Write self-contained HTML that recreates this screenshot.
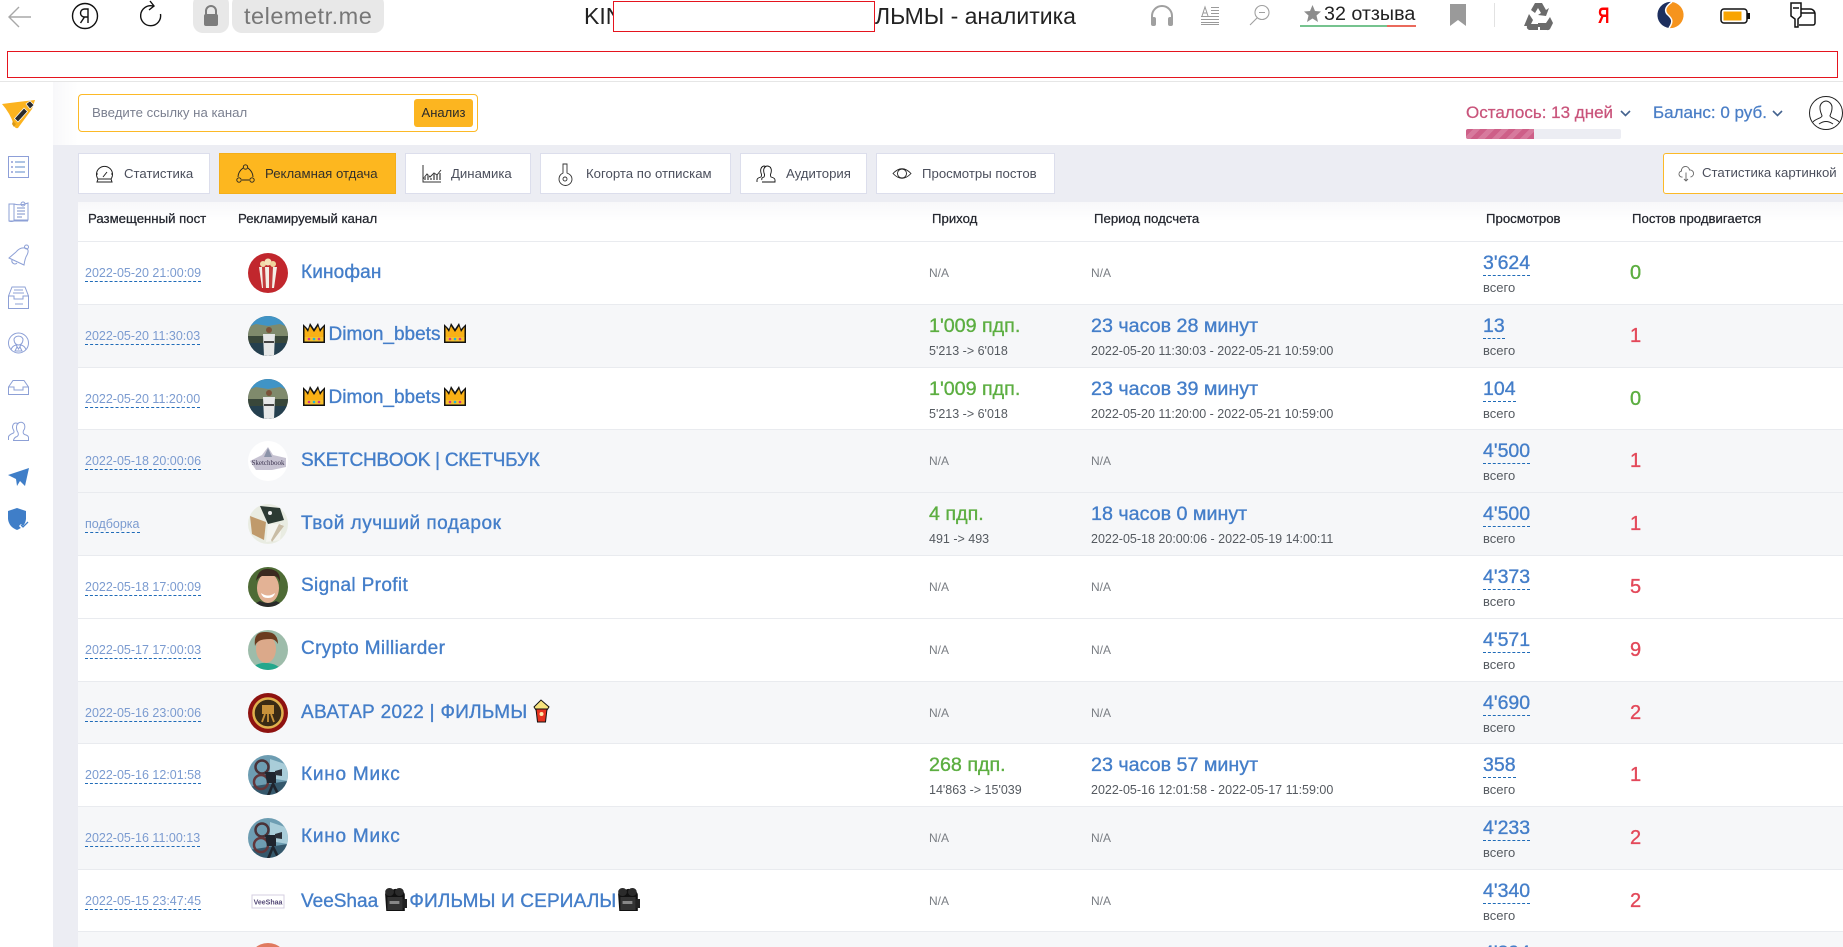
<!DOCTYPE html>
<html lang="ru"><head><meta charset="utf-8"><title>telemetr.me</title>
<style>
html,body{margin:0;padding:0;width:1843px;height:947px;overflow:hidden;background:#fff;font-family:"Liberation Sans","Noto Sans CJK SC",sans-serif}
*{box-sizing:border-box}
.a{position:absolute;white-space:nowrap}
svg{position:absolute;display:block;overflow:visible}
.tab{position:absolute;top:153px;height:41px;background:#fff;border:1px solid #dcdeec;font-size:13.2px;color:#4b4f5c;line-height:39px;white-space:nowrap}
.tab span{position:absolute;top:0}
.th{position:absolute;top:209px;line-height:20px;font-size:13.2px;color:#23262e;white-space:nowrap;-webkit-text-stroke:.25px #23262e}
.r{position:absolute;left:78px;width:1765px;border-top:1px solid #e9ebef;background:#fff;overflow:hidden}
.g{background:#f6f7f9}
.r>*{position:absolute;white-space:nowrap}
.dt{left:7px;top:22px;height:18px;line-height:19px;font-size:12.5px;color:#7b9bd0;border-bottom:1px dashed #1f6bb8}
.av{left:170px;top:11px;width:40px;height:40px}
.nm{left:223px;top:18px;line-height:25px;font-size:19px;color:#447ec9;-webkit-text-stroke:.35px #447ec9}
.up{top:17px}
.nm svg{position:static;display:inline-block;vertical-align:-4px}
.big{top:9px;line-height:24px;font-size:19.7px;-webkit-text-stroke:.35px currentColor}
.in{left:851px;color:#5cae41}.pr{left:1013px;color:#447ec9}
.sm{top:36px;line-height:20px;font-size:12.5px;color:#555a60}
.na{top:21px;line-height:20px;font-size:12px;color:#7a7e84}
.vw{left:1405px;top:9px;height:25px;line-height:24px;font-size:19.5px;color:#447ec9;border-bottom:1px dashed #1f6bb8;-webkit-text-stroke:.35px #447ec9}
.ws{left:1405px;top:36px;line-height:20px;font-size:13px;color:#555a60}
.ct{left:1552px;top:19px;line-height:24px;font-size:20px;-webkit-text-stroke:.35px currentColor}
.red{color:#e3495a}.grn{color:#5cae41}
.av{filter:blur(.35px)}
</style></head><body>

<svg width="0" height="0" style="position:absolute">
<defs>
<symbol id="crown" viewBox="0 0 24 22"><path d="M1 2l5 5 2-6 4 6 4-6 2 6 5-5v19H1z" fill="#111"/><path d="M2.500 5l3.500 5 2-6 4 6 4-6 2 6 3.500-5v11h-19z" fill="#f9b015"/><path d="M2.500 15h19v4.500h-19z" fill="#f6c02c"/><circle cx="7" cy="17" r="1.300" fill="#d6338f"/><circle cx="12" cy="17" r="1.300" fill="#20b6d6"/><circle cx="17" cy="17" r="1.300" fill="#d6338f"/></symbol>
<symbol id="cam" viewBox="0 0 22 24" preserveAspectRatio="none"><path d="M2 8a4 4 0 0 1 6-4 4 4 0 0 1 7 0 4 4 0 0 1 5 4v16H3z" fill="#111"/><circle cx="6" cy="5" r="4" fill="#2b2b2b"/><circle cx="15" cy="5" r="4" fill="#2b2b2b"/><path d="M4 10h14v13H4z" fill="#333"/><path d="M6 14h9v3H6z" fill="#888"/><path d="M18 12h4v9h-4z" fill="#222"/></symbol>
<symbol id="p1" viewBox="0 0 40 40"><defs><clipPath id="c1"><circle cx="20" cy="20" r="20"/></clipPath></defs><g clip-path="url(#c1)"><path d="M0 0h40v40H0z" fill="#2a3f4d"/><path d="M0 0h40v12H0z" fill="#4094c6"/><path d="M0 11l8-3 12 2 12-2 8 3v9H0z" fill="#7f8a6c"/><path d="M0 20h40v8H0z" fill="#39473a"/><path d="M0 27h40v13H0z" fill="#25404f"/><circle cx="21" cy="14" r="3" fill="#7a5239"/><path d="M15 18h12l-1 22H16z" fill="#e6e8e8"/><path d="M16 25h10v2H16z" fill="#444"/></g></symbol>
<symbol id="p2" viewBox="0 0 40 40"><defs><clipPath id="c2"><circle cx="20" cy="20" r="20"/></clipPath></defs><g clip-path="url(#c2)"><path d="M0 0h40v40H0z" fill="#6d9db2"/><path d="M22 4l18 6v16l-18-3z" fill="#a9cdd9"/><path d="M0 32l40-6v14H0z" fill="#35586c"/><circle cx="14" cy="12" r="6.500" fill="none" stroke="#4a3238" stroke-width="2.500"/><circle cx="13" cy="27" r="7" fill="none" stroke="#63363a" stroke-width="2.500"/><path d="M17 17h11v11H19z" fill="#1f252e"/><path d="M27 16l7-2v7l-7-1z" fill="#2b3038"/><path d="M24 28l-5 12h3l3-8 4 8h3l-6-12z" fill="#1f252e"/></g></symbol>
</defs></svg>

<!-- browser bar -->
<svg style="left:8px;top:6px" width="24" height="22" fill="none" stroke="#a8a8a8" stroke-width="1.400"><path d="M1 11h22M11 1L1 11l10 10"/></svg>
<svg style="left:71px;top:2px" width="28" height="28" fill="none" stroke="#111" stroke-width="1.400"><circle cx="14" cy="14" r="12.500"/><path d="M17 21V7h-3.500a4 4 0 0 0 0 8H17M13.500 15l-4 6"/></svg>
<svg style="left:139px;top:1px" width="24" height="26" fill="none" stroke="#111" stroke-width="1.400"><path d="M21.500 13A10 10 0 1 1 14 5M11 0l4 5-5 4"/></svg>
<div class="a" style="left:193px;top:-6px;width:36px;height:39px;background:#e8e8e8;border-radius:10px"></div>
<svg style="left:203px;top:5px" width="16" height="22"><path d="M3 10V6a5 5 0 0 1 10 0v4" fill="none" stroke="#7d7d7d" stroke-width="2"/><rect x="1" y="9" width="14" height="12" rx="2" fill="#7d7d7d"/></svg>
<div class="a" style="left:232px;top:-6px;width:152px;height:39px;background:#e8e8e8;border-radius:10px"></div>
<div class="a" style="left:244px;top:1px;line-height:30px;font-size:23.500px;color:#777;letter-spacing:.5px">telemetr.me</div>
<div class="a" style="left:584px;top:1px;line-height:30px;font-size:23px;color:#222">KIN</div>
<div class="a" style="left:875px;top:1px;line-height:30px;font-size:23px;color:#222">ЛЬМЫ - аналитика</div>
<div class="a" style="left:613px;top:1px;width:262px;height:31px;border:1px solid #e5141e;background:#fff"></div>
<svg style="left:1150px;top:5px" width="24" height="21"><path d="M2 14V11a10 10 0 0 1 20 0v3" fill="none" stroke="#a0a0a0" stroke-width="2"/><rect x="1" y="12" width="5" height="9" rx="2" fill="#a0a0a0"/><rect x="18" y="12" width="5" height="9" rx="2" fill="#a0a0a0"/></svg>
<svg style="left:1201px;top:6px" width="18" height="19" fill="none" stroke="#9a9a9a"><path d="M1 10l3-9 3 9M2 7h4M10 1.500h8M10 4.500h8M10 7.500h8M0 10.500h18M0 13.500h18M0 16.500h18M0 18.500h18"/></svg>
<svg style="left:1249px;top:5px" width="21" height="20" fill="none" stroke="#a0a0a0" stroke-width="1.100"><circle cx="13" cy="7.500" r="7"/><path d="M8 13L1 20M10 7.500h6"/></svg>
<svg style="left:1304px;top:5px" width="17" height="17"><path d="M8.500 0l2.500 6 6 .5-4.500 4 1.500 6.500-5.500-3.500L3 17l1.500-6.500L0 6.500 6 6z" fill="#8c8c8c"/></svg>
<div class="a" style="left:1324px;top:1px;line-height:26px;font-size:19.700px;color:#222">32 отзыва</div>
<div class="a" style="left:1300px;top:25px;width:87px;height:2px;background:#76c38f"></div>
<div class="a" style="left:1387px;top:25px;width:29px;height:2px;background:#ea6a5c"></div>
<svg style="left:1450px;top:4px" width="16" height="22"><path d="M0 0h16v22l-8-6-8 6z" fill="#9a9a9a"/></svg>
<div class="a" style="left:1494px;top:3px;width:1px;height:24px;background:#e2e2e2"></div>
<svg style="left:1524px;top:2px" width="29" height="28"><path d="M11 1h7l4 7 3-2-3 8-8-1 3-2-3-5-3 5-4-3zM5 12l4 6-2 4h7v6H6a3 3 0 0 1-3-4l-3 0zM16 28v-3l-2 0 0-7 0 3 8 0 4-6 3 6-3 6a3 3 0 0 1-3 1h-4z" fill="#6b6b6b"/></svg>
<div class="a" style="left:1598px;top:3px;line-height:26px;font-size:22px;font-weight:bold;color:#f00;transform:scaleX(.72);transform-origin:left">Я</div>
<svg style="left:1656px;top:2px" width="27" height="26"><path d="M16 0C10 4 8 8 11 12 14 15 19 18 13 26A13 13 0 0 1 16 0z" fill="#1d2f5e"/><path d="M16 0C10 4 8 8 11 12 14 15 19 18 13 26A13 13 0 0 0 16 0z" fill="#f6941d"/><path d="M16 0C10 4 8 8 11 12 14 15 19 18 13 26" fill="none" stroke="#fff" stroke-width="1.500"/></svg>
<svg style="left:1720px;top:8px" width="31" height="16"><rect x="1" y="1" width="26" height="14" rx="3" fill="#fff" stroke="#111" stroke-width="1.500"/><rect x="3.500" y="3.500" width="18" height="9" fill="#f9a400"/><rect x="27" y="5" width="3" height="6" fill="#111"/></svg>
<svg style="left:1789px;top:2px" width="28" height="27" fill="none" stroke="#111" stroke-width="1.500"><path d="M2 1h10v13l-3 3v8H6v-8L2 14zM4 6h6M12 7h9a5 5 0 0 1 5 5v9a2 2 0 0 1-2 2H10M12 11h14"/></svg>

<div class="a" style="left:7px;top:51px;width:1831px;height:27px;border:1px solid #e5141e"></div>
<div class="a" style="left:0;top:81px;width:1843px;height:1px;background:#e6e6e6"></div>

<!-- layout backgrounds -->
<div class="a" style="left:53px;top:82px;width:25px;height:63px;background:linear-gradient(90deg,#f8f8fa,#fff)"></div>
<div class="a" style="left:53px;top:145px;width:1790px;height:57px;background:#ecedf3"></div>
<div class="a" style="left:53px;top:202px;width:25px;height:745px;background:#ecedf3"></div>
<div class="a" style="left:78px;top:202px;width:1765px;height:39px;background:linear-gradient(#f8f8fa,#fff 50%)"></div>

<!-- sidebar -->
<svg style="left:1px;top:99px" width="35" height="30"><path d="M1 5Q16 3 34 1L31 10 17 29Q14 30 13 26Q9 14 1 5z" fill="#fcb31f"/><path d="M25 5l4-3 4 4-4 4zM23 9l3.500 3.500L17 23l-3.500-3.500z" fill="#2c2c2c" stroke="#fff" stroke-width=".7"/><path d="M12 22l3 3-2 3-2-3z" fill="#d99a18"/></svg>
<svg style="left:8px;top:156px" width="21" height="22" fill="none" stroke="#8d9fd8"><rect x=".5" y=".5" width="20" height="21"/><path d="M7 6h10M7 11h10M7 16h10" stroke="#5d8ac9"/><path d="M3 6h2M3 11h2M3 16h2" stroke="#5a6ac0"/></svg>
<svg style="left:8px;top:201px" width="21" height="21" fill="none" stroke="#8da0d6"><path d="M1 3h5v17H1zM6 3q7 2 14-1v17H6M1 20q2 1 5 0h14"/><path d="M9 7h8M9 10h8M9 13h8M9 16h5" stroke="#7a8fc9"/><circle cx="15" cy="3" r="2"/></svg>
<svg style="left:8px;top:244px" width="21" height="22" fill="none" stroke="#8da0d6"><path d="M1 14L8 8Q12 3 17 4t2 7Q17 14 16 21zM1 14l15 7M4 16a3 3 0 0 0 5 3"/><circle cx="18.500" cy="3" r="2"/></svg>
<svg style="left:8px;top:286px" width="21" height="23" fill="none" stroke="#8da0d6"><path d="M.5 10L4 1h13l3.500 9v12.500H.5zM.5 10H6v3h9v-3h5.500M6 4h9M5 7h11M7 18h8" /></svg>
<svg style="left:8px;top:332px" width="21" height="22" fill="none" stroke="#8da0d6"><circle cx="10.500" cy="11" r="10"/><path d="M6 7a5 5 0 0 1 9 0c0 4-2 6-4.500 6S6 11 6 7zM3 18q1-4 5-5l2.500 4 2.500-4q4 1 5 5M9 15l-2 4h7l-2-4"/></svg>
<svg style="left:8px;top:380px" width="21" height="15" fill="none" stroke="#8da0d6"><path d="M.5 7L5 .5h11L20.500 7v7.500H.5zM.5 7H6v3h9V7h5.500"/></svg>
<svg style="left:8px;top:421px" width="21" height="20" fill="none" stroke="#8da0d6"><path d="M.5 19v-3q0-2 5-4 1-1 0-3-2-3 0-6 2-2 5 0M5 19.500h15.500v-3q0-2-4-3-2-1-1-4 2-2 1-6-2-3-5-2-3 1-3 5 0 3 1.500 5 1 3-1 4-3 1-3.500 4"/></svg>
<svg style="left:8px;top:468px" width="21" height="18"><path d="M0 7L21 0 17 18l-5-5-3 5-1-7z" fill="#3f7ec8"/></svg>
<svg style="left:8px;top:508px" width="21" height="22"><path d="M9 0l9 3v8q-1 8-9 11Q1 19 0 11V3z" fill="#3f7ec8"/><path d="M12 17l3 3 6-6" stroke="#fff" stroke-width="3" fill="none"/><path d="M13 17l2 2 5-5" stroke="#3f7ec8" stroke-width="1.300" fill="none"/></svg>

<!-- search -->
<div class="a" style="left:78px;top:94px;width:400px;height:38px;border:1px solid #fcb927;border-radius:4px;background:#fff"></div>
<div class="a" style="left:92px;top:103px;line-height:20px;font-size:13.2px;color:#7b8090">Введите ссылку на канал</div>
<div class="a" style="left:414px;top:99px;width:59px;height:28px;background:#fcb520;border-radius:3px;text-align:center;line-height:28px;font-size:13px;color:#2a2a2a">Анализ</div>

<!-- right header -->
<div class="a" style="left:1466px;top:102px;line-height:22px;font-size:17px;color:#c9547b;-webkit-text-stroke:.25px #c9547b">Осталось: 13 дней</div>
<svg style="left:1620px;top:110px" width="11" height="7" fill="none" stroke="#44638f" stroke-width="1.600"><path d="M1 1l4.500 4.500L10 1"/></svg>
<div class="a" style="left:1653px;top:102px;line-height:22px;font-size:17px;color:#4a7ec6;-webkit-text-stroke:.25px #4a7ec6">Баланс: 0 руб.</div>
<svg style="left:1772px;top:110px" width="11" height="7" fill="none" stroke="#44638f" stroke-width="1.600"><path d="M1 1l4.500 4.500L10 1"/></svg>
<div class="a" style="left:1466px;top:129px;width:155px;height:10px;background:#ecedf3;border-radius:2px"></div>
<div class="a" style="left:1466px;top:129px;width:68px;height:10px;border-radius:2px 0 0 2px;background:repeating-linear-gradient(-45deg,#ce5f88 0 5px,#d77a9d 5px 10px)"></div>
<svg style="left:1809px;top:96px" width="34" height="34" fill="none" stroke="#222"><circle cx="17" cy="17" r="16.500"/><path d="M17 5a6.500 6.500 0 0 0-6 7c0 4 2 7 2 8 0 2-7 3-9 6M17 5a6.500 6.500 0 0 1 6 7c0 4-2 7-2 8 0 2 7 3 9 6M10 28q7-5 14 0"/></svg>

<!-- tabs -->
<div class="tab" style="left:78px;width:132px"><span style="left:45px">Статистика</span></div>
<svg style="left:95px;top:165px" width="19" height="18" fill="none" stroke="#222"><path d="M3 14a8 8 0 1 1 13 0M2 17h15l-1-3H3zM8 12l4-5M1 9h2M16 9h2"/></svg>
<div class="tab" style="left:219px;width:177px;background:#fdb71f;border-color:#f4af1a;color:#33302a"><span style="left:45px">Рекламная отдача</span></div>
<svg style="left:236px;top:164px" width="19" height="19" fill="none" stroke="#222" stroke-width=".9"><circle cx="9.500" cy="3" r="2.200"/><circle cx="3" cy="16" r="2.200"/><circle cx="16" cy="16" r="2.200"/><path d="M6 16h7M2 13q0-5 5-9M17 13q0-5-5-9"/></svg>
<div class="tab" style="left:405px;width:126px"><span style="left:45px">Динамика</span></div>
<svg style="left:422px;top:165px" width="19" height="18" fill="none" stroke="#333"><path d="M1 0v17h18M1 14l4-5 3 3 4-4 3 2 4-5"/><path d="M3 15V11M6 15v-5M9 15v-2M12 15V9M15 15v-5M18 15V8" stroke="#888" stroke-width="2"/></svg>
<div class="tab" style="left:540px;width:191px"><span style="left:45px">Когорта по отпискам</span></div>
<svg style="left:558px;top:163px" width="15" height="22" fill="none" stroke="#333" stroke-width=".9"><path d="M5 1h4v9q5 2 5 6a6 6 0 0 1-13 0q0-4 4-6z"/><circle cx="7" cy="16" r="2"/></svg>
<div class="tab" style="left:740px;width:127px"><span style="left:45px">Аудитория</span></div>
<svg style="left:757px;top:165px" width="18" height="18" fill="none" stroke="#111" stroke-width=".9"><path d="M0 17v-2q0-2 4-3 1-2 0-4-1-4 1-6 2-2 4 0M5 17h13v-2q0-2-4-3-1-2 0-4 1-4-1-6-3-2-5 0-2 2-1 6 1 2 0 4-3 1-2 3"/></svg>
<div class="tab" style="left:876px;width:179px"><span style="left:45px">Просмотры постов</span></div>
<svg style="left:893px;top:167px" width="18" height="13" fill="none" stroke="#222" stroke-width=".9"><path d="M0 6.500Q9-3 18 6.500 9 16 0 6.500z"/><circle cx="9" cy="6.500" r="4.500"/><path d="M6 3q3-2 6 0"/></svg>
<div class="tab" style="left:1663px;width:190px;border-color:#fcb927;border-radius:3px"><span style="left:38px;top:-1px">Статистика картинкой</span></div>
<svg style="left:1679px;top:166px" width="14" height="16" fill="none" stroke="#666" stroke-width=".9"><path d="M3.500 11a3 3 0 0 1-1-6 4 4 0 0 1 8-1 3 3 0 0 1 1 7M7 6.500v8.500M5 13l2 2 2-2"/></svg>

<!-- table header -->
<div class="th" style="left:88px">Размещенный пост</div>
<div class="th" style="left:238px">Рекламируемый канал</div>
<div class="th" style="left:932px">Приход</div>
<div class="th" style="left:1094px">Период подсчета</div>
<div class="th" style="left:1486px">Просмотров</div>
<div class="th" style="left:1632px">Постов продвигается</div>

<!-- rows -->
<div class="r" style="top:241px;height:63px">
<div class="dt">2022-05-20 21:00:09</div>
<svg class="av" viewBox="0 0 40 40"><circle cx="20" cy="20" r="20" fill="#c1272d"/><path d="M11 14h18l-3 21H14z" fill="#f4efe6"/><path d="M14 14l1 21h3l-1-21zM21 14l0 21h3l1-21z" fill="#c43d3d"/><circle cx="15" cy="11" r="3" fill="#f0d9a8"/><circle cx="20" cy="9" r="3.500" fill="#f4e2b8"/><circle cx="25" cy="11" r="3" fill="#efd49c"/></svg>
<div class="nm" style="letter-spacing:.15px">Кинофан</div>
<div class="na" style="left:851px">N/A</div><div class="na" style="left:1013px">N/A</div>
<div class="vw">3'624</div><div class="ws">всего</div><div class="ct grn">0</div>
</div>

<div class="r g" style="top:304px;height:63px">
<div class="dt">2022-05-20 11:30:03</div>
<svg class="av"><use href="#p1" width="40" height="40"/></svg>
<div class="nm up"><svg width="24" height="22" style="margin:0 2.500px 0 1px"><use href="#crown" width="24" height="22"/></svg>Dimon_bbets<svg width="24" height="22" style="margin-left:2.500px"><use href="#crown" width="24" height="22"/></svg></div>
<div class="big in">1'009 пдп.</div><div class="sm" style="left:851px">5'213 -&gt; 6'018</div>
<div class="big pr">23 часов 28 минут</div><div class="sm" style="left:1013px">2022-05-20 11:30:03 - 2022-05-21 10:59:00</div>
<div class="vw">13</div><div class="ws">всего</div><div class="ct red">1</div>
</div>

<div class="r" style="top:367px;height:62px">
<div class="dt">2022-05-20 11:20:00</div>
<svg class="av"><use href="#p1" width="40" height="40"/></svg>
<div class="nm up"><svg width="24" height="22" style="margin:0 2.500px 0 1px"><use href="#crown" width="24" height="22"/></svg>Dimon_bbets<svg width="24" height="22" style="margin-left:2.500px"><use href="#crown" width="24" height="22"/></svg></div>
<div class="big in">1'009 пдп.</div><div class="sm" style="left:851px">5'213 -&gt; 6'018</div>
<div class="big pr">23 часов 39 минут</div><div class="sm" style="left:1013px">2022-05-20 11:20:00 - 2022-05-21 10:59:00</div>
<div class="vw">104</div><div class="ws">всего</div><div class="ct grn">0</div>
</div>

<div class="r g" style="top:429px;height:63px">
<div class="dt">2022-05-18 20:00:06</div>
<svg class="av" viewBox="0 0 40 40"><circle cx="20" cy="20" r="20" fill="#fff"/><path d="M2 20l12-6 6-8 5 8 13 3v9l-14 3H8z" fill="#c7c3d2"/><path d="M16 16l4-9 4 9z" fill="#8b93a8"/><text x="20" y="24" font-size="7" text-anchor="middle" font-family="Liberation Serif,serif" fill="#3c3550">Sketchbook</text></svg>
<div class="nm" style="letter-spacing:-.28px">SKETCHBOOK | СКЕТЧБУК</div>
<div class="na" style="left:851px">N/A</div><div class="na" style="left:1013px">N/A</div>
<div class="vw">4'500</div><div class="ws">всего</div><div class="ct red">1</div>
</div>

<div class="r g" style="top:492px;height:63px">
<div class="dt">подборка</div>
<svg class="av" viewBox="0 0 40 40"><circle cx="20" cy="20" r="20" fill="#e9ece2"/><path d="M12 2l20 2 4 12-16 4z" fill="#2c3a33"/><path d="M2 12l16 6-2 18L4 30z" fill="#c09a6b"/><path d="M20 20l14 0-2 16-14 2z" fill="#f4f4ef"/><path d="M24 38l12-16-5-2-8 16z" fill="#c9bda6"/><circle cx="22" cy="9" r="2" fill="#eee"/></svg>
<div class="nm" style="letter-spacing:.5px">Твой лучший подарок</div>
<div class="big in">4 пдп.</div><div class="sm" style="left:851px">491 -&gt; 493</div>
<div class="big pr">18 часов 0 минут</div><div class="sm" style="left:1013px">2022-05-18 20:00:06 - 2022-05-19 14:00:11</div>
<div class="vw">4'500</div><div class="ws">всего</div><div class="ct red">1</div>
</div>

<div class="r" style="top:555px;height:63px">
<div class="dt">2022-05-18 17:00:09</div>
<svg class="av" viewBox="0 0 40 40"><defs><clipPath id="c3"><circle cx="20" cy="20" r="20"/></clipPath></defs><g clip-path="url(#c3)"><path d="M0 0h40v40H0z" fill="#4e6b35"/><ellipse cx="20" cy="21" rx="11" ry="15" fill="#e3b295"/><path d="M8 14Q10 1 21 2q12 1 11 13-2-6-6-6H14q-4 2-6 5z" fill="#3a2a20"/><path d="M13 26q7 5 14 0-1 5-7 5t-7-5z" fill="#fff"/><path d="M0 40l12-6q8 4 16 0l12 6z" fill="#2a2a2a"/></g></svg>
<div class="nm up" style="letter-spacing:.36px">Signal Profit</div>
<div class="na" style="left:851px">N/A</div><div class="na" style="left:1013px">N/A</div>
<div class="vw">4'373</div><div class="ws">всего</div><div class="ct red">5</div>
</div>

<div class="r" style="top:618px;height:63px">
<div class="dt">2022-05-17 17:00:03</div>
<svg class="av" viewBox="0 0 40 40"><defs><clipPath id="c4"><circle cx="20" cy="20" r="20"/></clipPath></defs><g clip-path="url(#c4)"><path d="M0 0h40v40H0z" fill="#9dbcaa"/><ellipse cx="18" cy="19" rx="10" ry="14" fill="#dba98a"/><path d="M7 16Q5 1 18 2q12 0 12 12-3-5-7-5-9 0-12 2-3 2-4 5z" fill="#6b3c20"/><path d="M0 40q10-8 18-7 10 0 16 7z" fill="#23a78c"/></g></svg>
<div class="nm up" style="letter-spacing:.35px">Crypto Milliarder</div>
<div class="na" style="left:851px">N/A</div><div class="na" style="left:1013px">N/A</div>
<div class="vw">4'571</div><div class="ws">всего</div><div class="ct red">9</div>
</div>

<div class="r g" style="top:681px;height:62px">
<div class="dt">2022-05-16 23:00:06</div>
<svg class="av" viewBox="0 0 40 40"><circle cx="20" cy="20" r="20" fill="#8e1210"/><circle cx="20" cy="20" r="14.500" fill="#3a2a14" stroke="#e0b04c" stroke-width="2.500"/><path d="M14 12h12v9H14z" fill="#c9923a"/><path d="M17 21l-3 8M23 21l3 8M20 21v8" stroke="#c9923a" stroke-width="1.800"/></svg>
<div class="nm up" style="letter-spacing:.3px">АВАТАР 2022 | ФИЛЬМЫ <svg width="17" height="24" viewBox="0 0 17 24" style="vertical-align:-5px"><path d="M1 8l7-7 8 7-2 3H3z" fill="#f7e47e" stroke="#111"/><path d="M3 10h11l-1.500 13h-8z" fill="#e6321e" stroke="#111"/><circle cx="8.500" cy="15" r="2" fill="#ffe8a8"/></svg></div>
<div class="na" style="left:851px">N/A</div><div class="na" style="left:1013px">N/A</div>
<div class="vw">4'690</div><div class="ws">всего</div><div class="ct red">2</div>
</div>

<div class="r" style="top:743px;height:63px">
<div class="dt">2022-05-16 12:01:58</div>
<svg class="av"><use href="#p2" width="40" height="40"/></svg>
<div class="nm" style="letter-spacing:.78px">Кино Микс</div>
<div class="big in">268 пдп.</div><div class="sm" style="left:851px">14'863 -&gt; 15'039</div>
<div class="big pr">23 часов 57 минут</div><div class="sm" style="left:1013px">2022-05-16 12:01:58 - 2022-05-17 11:59:00</div>
<div class="vw">358</div><div class="ws">всего</div><div class="ct red">1</div>
</div>

<div class="r g" style="top:806px;height:63px">
<div class="dt">2022-05-16 11:00:13</div>
<svg class="av"><use href="#p2" width="40" height="40"/></svg>
<div class="nm up" style="letter-spacing:.78px">Кино Микс</div>
<div class="na" style="left:851px">N/A</div><div class="na" style="left:1013px">N/A</div>
<div class="vw">4'233</div><div class="ws">всего</div><div class="ct red">2</div>
</div>

<div class="r" style="top:869px;height:62px">
<div class="dt">2022-05-15 23:47:45</div>
<svg class="av" viewBox="0 0 40 40"><rect x="4" y="14" width="32" height="13" fill="#fff" stroke="#d6cfe0"/><text x="20" y="23.500" font-size="7" font-weight="bold" text-anchor="middle" font-family="Liberation Sans,sans-serif" fill="#554a78">VeeShaa</text></svg>
<div class="nm up">VeeShaa <svg width="24" height="24"><use href="#cam" width="24" height="24"/></svg><span style="letter-spacing:.15px;margin-left:2px">ФИЛЬМЫ И СЕРИАЛЫ</span><svg width="24" height="24"><use href="#cam" width="24" height="24"/></svg></div>
<div class="na" style="left:851px">N/A</div><div class="na" style="left:1013px">N/A</div>
<div class="vw">4'340</div><div class="ws">всего</div><div class="ct red">2</div>
</div>

<div class="r g" style="top:931px;height:16px">
<svg class="av" viewBox="0 0 40 40"><circle cx="20" cy="20" r="20" fill="#e07a5f"/></svg>
<div class="vw">4'394</div>
</div>

</body></html>
